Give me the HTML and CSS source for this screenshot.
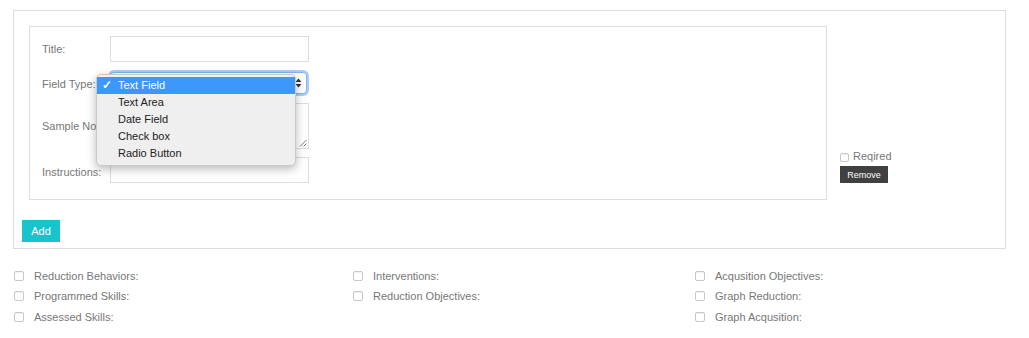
FILE: index.html
```html
<!DOCTYPE html>
<html>
<head>
<meta charset="utf-8">
<link rel="stylesheet" href="styles.css">
</head>
<body>
<div class="panel">
  <div class="top-row">
    <div class="field-box">
      <div class="row">
        <label class="lbl">Title:</label>
        <div class="input"></div>
      </div>
      <div class="row row-select">
        <label class="lbl">Field Type:</label>
        <div class="select">
          <span class="sel-text">Text Field</span>
          <svg class="sel-arrows" width="7" height="10" viewBox="0 0 7 10"><path d="M3.5 0.5 L6.5 4 L0.5 4 Z M3.5 9.5 L6.5 6 L0.5 6 Z" fill="#333"/></svg>
        </div>
        <div class="menu">
          <div class="item active"><span class="check">✓</span>Text Field</div>
          <div class="item">Text Area</div>
          <div class="item">Date Field</div>
          <div class="item">Check box</div>
          <div class="item">Radio Button</div>
        </div>
      </div>
      <div class="row row-notes">
        <label class="lbl">Sample Notes:</label>
        <div class="textarea">
          <svg class="grip" width="8" height="8" viewBox="0 0 8 8"><path d="M1 7.5 L7.5 1 M4.5 7.5 L7.5 4.5" stroke="#777" stroke-width="1"/></svg>
        </div>
      </div>
      <div class="row row-last">
        <label class="lbl">Instructions:</label>
        <div class="input"></div>
      </div>
    </div>
    <div class="side">
      <div class="req"><span class="cb small"></span>Reqired</div>
      <button class="remove">Remove</button>
    </div>
  </div>
  <button class="add">Add</button>
</div>
<div class="options">
  <div class="opt"><span class="cb"></span>Reduction Behaviors:</div>
  <div class="opt"><span class="cb"></span>Interventions:</div>
  <div class="opt"><span class="cb"></span>Acqusition Objectives:</div>
  <div class="opt"><span class="cb"></span>Programmed Skills:</div>
  <div class="opt"><span class="cb"></span>Reduction Objectives:</div>
  <div class="opt"><span class="cb"></span>Graph Reduction:</div>
  <div class="opt"><span class="cb"></span>Assessed Skills:</div>
  <div class="opt empty"></div>
  <div class="opt"><span class="cb"></span>Graph Acqusition:</div>
</div>
</body>
</html>
```
FILE: styles.css
```css
* { box-sizing: border-box; }
body {
  margin: 0;
  padding: 10px 23px 0 13px;
  font-family: "Liberation Sans", Arial, sans-serif;
  font-size: 11px;
  color: #777;
  background: #fff;
}
.panel {
  border: 1px solid #ddd;
  padding: 15px 0 6px 8px;
  height: 239px;
}
.top-row {
  display: flex;
  align-items: stretch;
}
.field-box {
  margin-left: 7px;
  width: 798px;
  height: 174px;
  border: 1px solid #ddd;
  padding: 9px 0 0 12px;
}
.row {
  display: flex;
  align-items: center;
  position: relative;
  margin-bottom: 9px;
}
.row:first-child { margin-bottom: 10px; }
.row-notes { margin-bottom: 8px; }
.lbl {
  width: 68px;
  flex: none;
  white-space: nowrap;
  color: #777;
}
.row-last .lbl { padding-top: 4px; }
.row-select .lbl { padding-top: 2px; }
.input {
  width: 199px;
  height: 26px;
  border: 1px solid #ddd;
}
.select {
  width: 197px;
  height: 22px;
  border: 1px solid #82b4ee;
  border-radius: 4px;
  box-shadow: 0 0 0 2px #a9cdf5;
  display: flex;
  align-items: center;
  justify-content: space-between;
  padding: 0 4px 0 8px;
  color: #222;
  background: #fff;
}
.sel-arrows { display: block; }
.menu {
  position: absolute;
  left: 54px;
  top: 2px;
  width: 200px;
  background: #efefef;
  border: 1px solid #c9c9c9;
  border-radius: 5px;
  box-shadow: 0 3px 10px rgba(0,0,0,0.28);
  padding: 2px 0 3px;
  z-index: 5;
  color: #222;
}
.item {
  height: 17px;
  line-height: 17px;
  padding-left: 21px;
  position: relative;
}
.item.active {
  background: #3d97fc;
  color: #fff;
}
.check {
  position: absolute;
  left: 5px;
  top: 0;
  font-size: 12px;
  font-weight: bold;
}
.textarea {
  flex: none;
  width: 199px;
  height: 46px;
  border: 1px solid #ddd;
  position: relative;
}
.grip {
  position: absolute;
  right: 1px;
  bottom: 1px;
}
.side {
  display: flex;
  flex-direction: column;
  justify-content: flex-end;
  padding: 0 0 17px 13px;
}
.req {
  display: flex;
  align-items: center;
  color: #777;
  margin-bottom: 4px;
  font-size: 11px;
}
.cb {
  display: inline-block;
  flex: none;
  width: 10px;
  height: 10px;
  border: 1px solid #c8c8c8;
  border-radius: 2px;
  background: #fff;
  box-shadow: inset 0 1px 1px rgba(0,0,0,0.06);
}
.cb.small {
  width: 9px;
  height: 9px;
  margin-right: 4px;
  margin-top: 3px;
}
.remove {
  width: 48px;
  height: 17px;
  padding: 0;
  border: 0;
  background: #404040;
  color: #fff;
  font-family: "Liberation Sans", Arial, sans-serif;
  font-size: 9px;
}
.add {
  margin-top: 20px;
  width: 38px;
  height: 22px;
  border: 0;
  padding: 0;
  background: #17c4cc;
  color: #fff;
  font-family: "Liberation Sans", Arial, sans-serif;
  font-size: 11px;
  display: block;
}
.options {
  display: grid;
  grid-template-columns: 339px 342px 1fr;
  row-gap: 7.5px;
  margin-top: 20px;
  padding-left: 1px;
}
.opt {
  display: flex;
  align-items: center;
  height: 13px;
  color: #777;
}
.opt .cb { margin-right: 10px; }
```
